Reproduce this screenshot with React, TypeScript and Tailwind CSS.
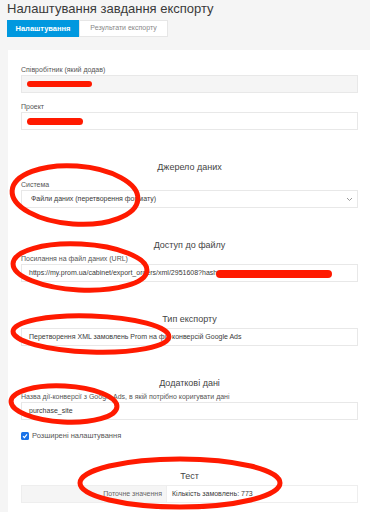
import React from "react";

const font = { fontFamily: '"Liberation Sans", Arial, sans-serif' };

function Label({ children }: { children: React.ReactNode }) {
  return <div className="text-[7px] leading-[9px] text-[#555]">{children}</div>;
}

function Heading({ children, className = "" }: { children: React.ReactNode; className?: string }) {
  return <div className={`text-center text-[9px] leading-[11px] text-[#444] ${className}`}>{children}</div>;
}

function Box({ children, className = "" }: { children?: React.ReactNode; className?: string }) {
  return (
    <div className={`relative h-[18px] border border-[#e8e8e8] flex items-center px-[7px] text-[7px] text-[#3a3a3a] ${className}`}>
      {children}
    </div>
  );
}

export default function App() {
  return (
    <div className="relative w-[370px] h-[512px] overflow-hidden bg-[#f5f5f5]" style={font}>
      <div className="pl-[7px] pt-[1px] text-[13px] leading-[15px] text-[#3a3a3a]">Налаштування завдання експорту</div>
      <div className="ml-[7px] mt-[4px] flex h-[17px] w-[161px]">
        <div className="w-[72px] bg-[#0098df] text-white font-bold text-[7.5px] flex items-center justify-center">Налаштування</div>
        <div className="flex-1 bg-white border border-[#e6e6e6] text-[#888] text-[7px] flex items-center justify-center">Результати експорту</div>
      </div>
      <div className="ml-[8px] mt-[13px] bg-white pl-[13px] pr-[12px] pt-[15px] h-[500px]">
        <Label>Співробітник (який додав)</Label>
        <Box className="mt-[1px] bg-[#f5f5f5]">
          <span className="absolute left-[5px] top-[5px] w-[65px] h-[6px] rounded-full bg-[#ff1a00]" />
        </Box>
        <div className="mt-[9px]">
          <Label>Проект</Label>
        </div>
        <Box className="mt-[1px] bg-white">
          <span className="absolute left-[5px] top-[5px] w-[56px] h-[7px] rounded-full bg-[#ff1a00]" />
        </Box>

        <Heading className="mt-[32px]">Джерело даних</Heading>
        <div className="mt-[7px]"><Label>Система</Label></div>
        <Box className="mt-[1px] justify-between pl-[9px] pr-[4px]">
          <span>Файли даних (перетворення формату)</span>
          <svg width="7" height="5" viewBox="0 0 7 5"><path d="M1 1 L3.5 3.5 L6 1" fill="none" stroke="#999" strokeWidth="1" /></svg>
        </Box>

        <Heading className="mt-[32px]">Доступ до файлу</Heading>
        <div className="mt-[3px]"><Label>Посилання на файл даних (URL)</Label></div>
        <Box className="mt-[1px]">
          <span className="whitespace-nowrap">https://my.prom.ua/cabinet/export_orders/xml/2951608?hash_tag=</span>
          <span className="absolute left-[194px] top-[5px] w-[116px] h-[8px] rounded-full bg-[#ff1a00]" />
        </Box>

        <Heading className="mt-[32px]">Тип експорту</Heading>
        <Box className="mt-[3px]">Перетворення XML замовлень Prom на фід конверсій Google Ads</Box>

        <Heading className="mt-[32px]">Додаткові дані</Heading>
        <div className="mt-[3px]"><Label>Назва дії-конверсії з Google Ads, в якій потрібно коригувати дані</Label></div>
        <Box className="mt-[1px]">purchase_site</Box>

        <div className="mt-[10px] flex items-center gap-[3px]">
          <span className="w-[8px] h-[8px] rounded-[1.5px] bg-[#1a73e8] flex items-center justify-center">
            <svg width="6" height="6" viewBox="0 0 6 6"><path d="M1 3.2 L2.4 4.6 L5 1.4" fill="none" stroke="white" strokeWidth="1.2" /></svg>
          </span>
          <span className="text-[7.5px] text-[#555]">Розширені налаштування</span>
        </div>

        <Heading className="mt-[30px]">Тест</Heading>
        <div className="mt-[3px] flex h-[18px] border border-[#eeeeee] text-[7px]">
          <div className="w-[145px] bg-[#f5f5f5] flex items-center justify-end pr-[4px] text-[#666] border-r border-[#eeeeee]">Поточне значення</div>
          <div className="flex-1 flex items-center pl-[5px] text-[#3a3a3a]">Кількість замовлень: 773</div>
        </div>
      </div>

      <svg className="absolute left-0 top-0 pointer-events-none" width="370" height="512" viewBox="0 0 370 512">
        <g fill="none" stroke="#ff1a00" strokeWidth="5">
          <ellipse cx="75" cy="195" rx="63" ry="29" transform="rotate(4 75 195)" />
          <ellipse cx="80" cy="267" rx="67" ry="23" transform="rotate(3 80 267)" />
          <ellipse cx="91" cy="334" rx="78" ry="18" transform="rotate(2 91 334)" />
          <ellipse cx="64" cy="404" rx="53" ry="18" transform="rotate(3 64 404)" />
          <ellipse cx="180" cy="483" rx="100" ry="24" />
        </g>
      </svg>
    </div>
  );
}
